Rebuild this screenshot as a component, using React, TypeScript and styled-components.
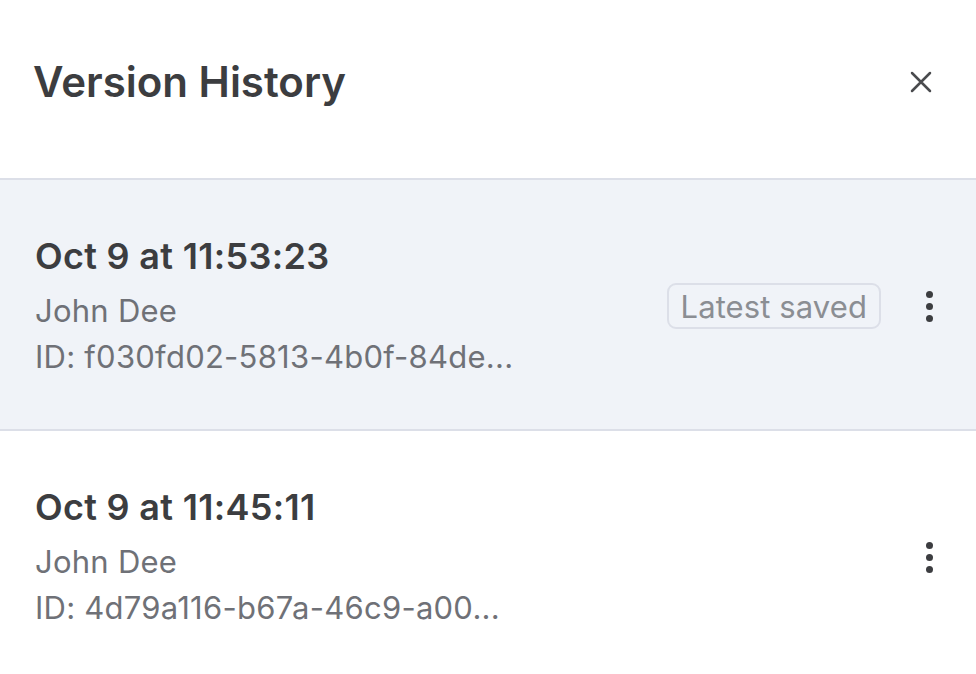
import styled, {createGlobalStyle} from 'styled-components'

const GlobalStyle = createGlobalStyle`
	html, body {
		margin: 0;
		padding: 0;
		background: #ffffff;
	}
	body {
		font-family: Inter, "Noto Sans", sans-serif;
		-webkit-font-smoothing: antialiased;
	}
`

interface Version {
	date: string
	author: string
	id: string
	latest?: boolean
}

const versions: Version[] = [
	{date: 'Oct 9 at 11:53:23', author: 'John Dee', id: 'ID: f030fd02-5813-4b0f-84de...', latest: true},
	{date: 'Oct 9 at 11:45:11', author: 'John Dee', id: 'ID: 4d79a116-b67a-46c9-a00...'},
]

const Panel = styled.div`
	width: 976px;
	min-height: 674px;
	background: #ffffff;
`
const Header = styled.div`
	display: flex;
	align-items: center;
	justify-content: space-between;
	height: 180px;
	padding: 0 43px 14px 33px;
	box-sizing: border-box;
	border-bottom: 2px solid #dcdfe8;
`
const Title = styled.h1`
	margin: 0;
	font-size: 42px;
	line-height: 56px;
	font-weight: 600;
	color: #3c3d40;
`
const CloseButton = styled.button`
	display: flex;
	align-items: center;
	justify-content: center;
	width: 24px;
	height: 24px;
	padding: 0;
	border: none;
	background: none;
	color: #4a4b4e;
`
const Row = styled.div<{$active?: boolean}>`
	display: flex;
	align-items: center;
	justify-content: space-between;
	padding: 52px 31px 49px 35px;
	background: ${p => (p.$active ? '#f0f3f8' : '#ffffff')};
	border-bottom: 2px solid ${p => (p.$active ? '#dcdfe8' : 'transparent')};
`
const Info = styled.div`
	display: flex;
	flex-direction: column;
`
const DateText = styled.div`
	font-size: 36px;
	line-height: 48px;
	font-weight: 600;
	letter-spacing: 0.3px;
	color: #3c3d40;
`
const Meta = styled.div`
	font-size: 31px;
	line-height: 46px;
	letter-spacing: 0.25px;
	color: #6f7177;
`
const Author = styled(Meta)`
	margin-top: 8px;
`
const Actions = styled.div`
	display: flex;
	align-items: center;
	gap: 32px;
`
const Badge = styled.span`
	display: inline-flex;
	align-items: center;
	height: 46px;
	padding: 0 12px;
	box-sizing: border-box;
	border: 2px solid #dcdfe8;
	border-radius: 9px;
	font-size: 31px;
	letter-spacing: 0.1px;
	color: #8b8e93;
`
const MenuButton = styled.button`
	display: flex;
	flex-direction: column;
	align-items: center;
	justify-content: center;
	gap: 5px;
	width: 32px;
	height: 44px;
	padding: 0;
	border: none;
	background: none;
`
const Dot = styled.span`
	width: 7px;
	height: 7px;
	border-radius: 50%;
	background: #3c3d40;
`

const App = () => {
	return (
		<Panel>
			<GlobalStyle />
			<Header>
				<Title>Version History</Title>
				<CloseButton aria-label="Close">
					<svg width="24" height="24" viewBox="0 0 24 24" fill="none" stroke="currentColor" strokeWidth="2.5" strokeLinecap="round">
						<path d="M3 3L21 21M21 3L3 21" />
					</svg>
				</CloseButton>
			</Header>
			{versions.map(v => (
				<Row key={v.id} $active={v.latest}>
					<Info>
						<DateText>{v.date}</DateText>
						<Author>{v.author}</Author>
						<Meta>{v.id}</Meta>
					</Info>
					<Actions>
						{v.latest && <Badge>Latest saved</Badge>}
						<MenuButton aria-label="More">
							<Dot />
							<Dot />
							<Dot />
						</MenuButton>
					</Actions>
				</Row>
			))}
		</Panel>
	)
}

export default App
